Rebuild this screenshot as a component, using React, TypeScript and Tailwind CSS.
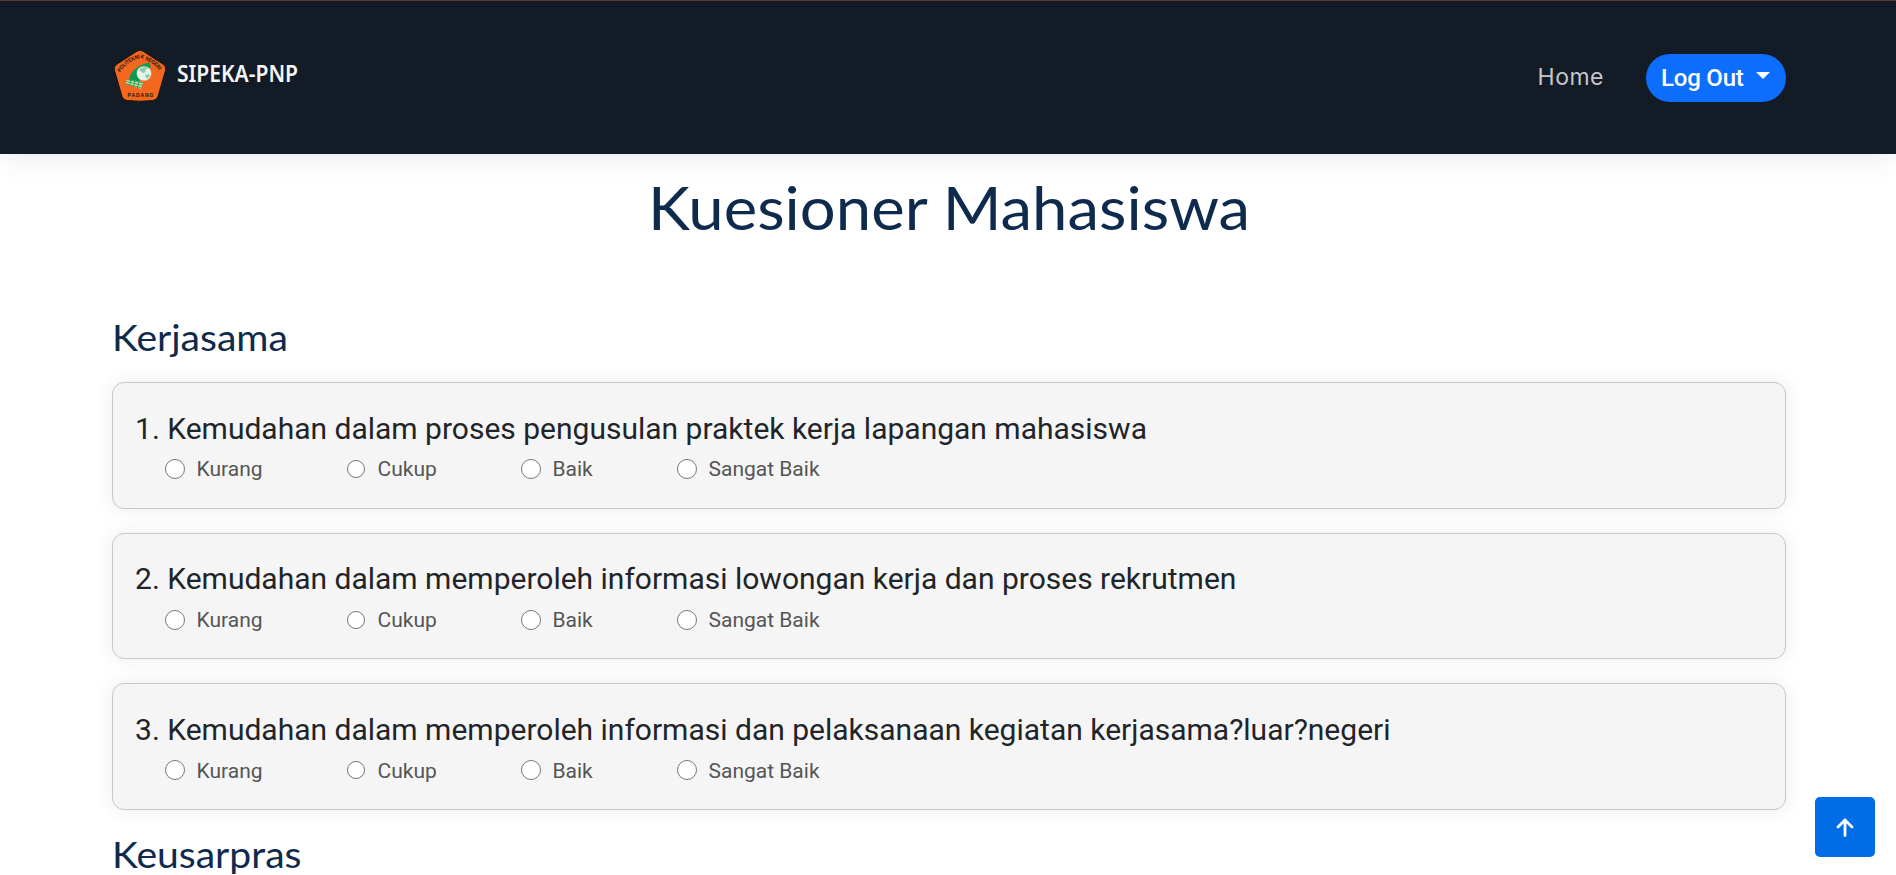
const options = [
  { label: "Kurang", slot: "w-[181px]", dot: "size-5" },
  { label: "Cukup", slot: "w-[175px]", dot: "size-[18px]" },
  { label: "Baik", slot: "w-[156px]", dot: "size-5" },
  { label: "Sangat Baik", slot: "", dot: "size-5" },
];

const questions = [
  "Kemudahan dalam proses pengusulan praktek kerja lapangan mahasiswa",
  "Kemudahan dalam memperoleh informasi lowongan kerja dan proses rekrutmen",
  "Kemudahan dalam memperoleh informasi dan pelaksanaan kegiatan kerjasama?luar?negeri",
];

function Logo() {
  return (
    <svg width="200" height="61" viewBox="0 0 200 61" className="block">
      <path
        d="M24.500 4.500Q28 2 31.500 4.500L51.500 17.500Q54.500 20 53.500 23.500L46 49.500Q44.800 53 41 53.500Q28 55 15 53.500Q11.200 53 10 49.500L2.500 23.500Q1.500 20 4.500 17.500Z"
        fill="#f4671f"
        stroke="#1c1410"
        strokeWidth="1"
      />
      <defs>
        <path id="arc-top" d="M8.200 25.500Q14 15 28 11Q42 15 48.500 25.500" />
      </defs>
      <text fontFamily="Liberation Sans" fontWeight="700" fontSize="5.6" fill="#20140c">
        <textPath href="#arc-top" textLength="48" lengthAdjust="spacingAndGlyphs">
          POLITEKNIK NEGERI
        </textPath>
      </text>
      <text x="15.500" y="49.500" fontFamily="Liberation Sans" fontWeight="700" fontSize="5" textLength="26" fill="#20140c">
        PADANG
      </text>
      <path d="M17 32.500Q19 20 37 15.500L39 20L27 34.500Z" fill="#0d9a50" />
      <path d="M15 32.500L31 35L29 42L13.500 36.500Z" fill="#d9e2b4" />
      <path
        d="M15 32.500L31 36M14.500 34.500L30.500 38.500M13.500 36.500L29.500 41M19 32.500L17.500 38M23 33L21.500 39.500M27 34L25.500 41"
        stroke="#239a55"
        strokeWidth=".9"
      />
      <circle cx="32" cy="26.500" r="7.300" fill="#e6f3e8" />
      <path d="M27 23Q29 20 34 20L36 22L33 23L34 25L31 26L29 24.500ZM33 28L37 27L38 29L35 32L33.500 30Z" fill="#8ccba6" />
      <text
        x="65"
        y="34.500"
        fontFamily="Noto Sans"
        fontWeight="600"
        fontSize="23.500"
        textLength="121"
        lengthAdjust="spacingAndGlyphs"
        fill="#f5f6f7"
      >
        SIPEKA-PNP
      </text>
    </svg>
  );
}

export default function App() {
  return (
    <div className="h-[875px] overflow-hidden bg-white font-['Roboto',sans-serif] text-[#212529]">
      <header className="flex h-[154px] items-center justify-between border-t border-[#583a30] bg-[#131b26] pl-[112px] pr-[110px] shadow-[0_0_30px_rgba(0,0,0,0.1)]">
        <Logo />
        <nav className="flex items-center gap-[42px]">
          <a className="-mt-px font-['Inter',sans-serif] text-[23px] tracking-[0.5px] text-[#c4c6c9]">Home</a>
          <button className="flex h-12 w-[140px] items-center rounded-full bg-[#0d6efd] pl-[15px] text-2xl font-medium tracking-[-0.2px] text-white">
            Log Out
            <svg width="14" height="7" viewBox="0 0 14 7" className="-mt-1 ml-3">
              <path d="M0 0H14L7 7Z" fill="white" />
            </svg>
          </button>
        </nav>
      </header>
      <main className="pl-[112px] pr-[110px]">
        <h1 className="mt-[17px] scale-x-[1.057] text-center font-['Lato',sans-serif] text-[60px] leading-[72px] text-[#0e2a4d]">
          Kuesioner Mahasiswa
        </h1>
        <h2 className="mt-[72px] w-fit origin-left scale-x-[1.085] font-['Lato',sans-serif] text-[36px] leading-[44px] text-[#0e2a4d]">
          Kerjasama
        </h2>
        <div className="mt-[23px] flex flex-col gap-6">
          {questions.map((q, i) => (
            <section
              key={q}
              className="h-[126.700px] rounded-xl border border-[#c8c8c8] bg-[#f5f5f5] px-[22px] pt-[27.500px] shadow-[0_0_20px_rgba(0,0,0,0.08)]"
            >
              <p className="text-[30px] leading-9">
                {i + 1}. {q}
              </p>
              <div className="flex pl-[30px] pt-[12.500px]">
                {options.map((o) => (
                  <label key={o.label} className={`flex h-5 items-center ${o.slot}`}>
                    <span className="flex w-5 justify-center">
                      <span className={`rounded-full border border-[#767676] bg-white ${o.dot}`} />
                    </span>
                    <span className="ml-[11.500px] pt-0.5 text-[21px] text-[#555555]">{o.label}</span>
                  </label>
                ))}
              </div>
            </section>
          ))}
        </div>
        <h2 className="mt-[22px] w-fit origin-left scale-x-[1.085] font-['Lato',sans-serif] text-[36px] leading-[44px] text-[#0e2a4d]">
          Keusarpras
        </h2>
      </main>
      <button className="fixed bottom-[18px] right-[21px] flex size-[60px] items-center justify-center rounded-[5px] bg-[#006ce5]">
        <svg width="18" height="19" viewBox="0 0 18 19" fill="none">
          <path d="M9 17.500V2M2 9L9 2L16 9" stroke="white" strokeWidth="2.800" strokeLinejoin="round" strokeLinecap="round" />
        </svg>
      </button>
    </div>
  );
}
